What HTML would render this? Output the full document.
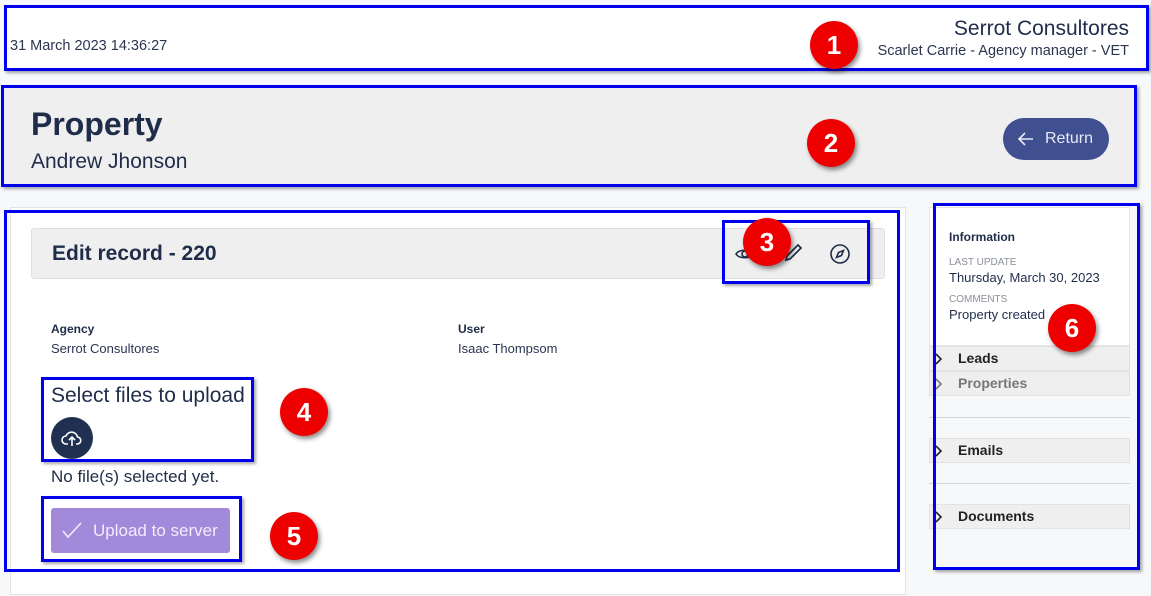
<!DOCTYPE html>
<html><head><meta charset="utf-8"><style>
*{box-sizing:border-box;margin:0;padding:0}
body{width:1151px;height:596px;overflow:hidden;background:#f7f8fa;font-family:"Liberation Sans",sans-serif;color:#1f2d4a;position:relative}
.a{position:absolute}
.bb{position:absolute;border:3px solid #0000ee;box-shadow:2px 2px 3px rgba(0,0,0,.35)}
.num{position:absolute;width:48px;height:48px;border-radius:50%;background:#ee0000;color:#fff;font:bold 26px "Liberation Sans",sans-serif;text-align:center;line-height:48px;box-shadow:2px 3px 5px rgba(0,0,0,.45);z-index:5}
.row{position:absolute;left:929px;width:201px;height:25px;background:#efefef;border:1px solid #e2e2e2;font-weight:bold;font-size:14px;color:#222;line-height:23px;padding-left:28px}
.row svg{position:absolute;left:5px;top:6px}
.hr{position:absolute;left:929px;width:201px;height:1px;background:#d0d3d8}
</style></head><body>
<div class="a" style="left:4px;top:5px;width:1145px;height:65px;background:#fff"></div>
<div class="a" style="left:10px;top:38px;font-size:14.5px;color:#2a3550">31 March 2023 14:36:27</div>
<div class="a" style="right:22px;top:17px;font-size:21px;color:#1f2d4a">Serrot Consultores</div>
<div class="a" style="right:22px;top:43px;font-size:14.5px;color:#2a3550">Scarlet Carrie - Agency manager - VET</div>
<div class="bb" style="left:4px;top:5px;width:1145px;height:66px"></div>
<div class="num" style="left:810px;top:21px">1</div>

<div class="a" style="left:1px;top:85px;width:1135px;height:101px;background:#efefef"></div>
<div class="a" style="left:31px;top:106px;font-size:32px;font-weight:bold;color:#1f2d4a">Property</div>
<div class="a" style="left:31px;top:150px;font-size:21px;color:#1f2d4a">Andrew Jhonson</div>
<div class="a" style="left:1003px;top:118px;width:106px;height:42px;border-radius:21px;background:#3f4f8f;color:#e8eaf5;font-size:16px;line-height:42px;padding-left:42px">Return
<svg class="a" style="left:14px;top:12px" width="18" height="18" viewBox="0 0 18 18" fill="none" stroke="#e8eaf5" stroke-width="1.6"><path d="M16 9H2M8 3L2 9l6 6"/></svg></div>
<div class="bb" style="left:1px;top:85px;width:1136px;height:102px"></div>
<div class="num" style="left:807px;top:119px">2</div>

<div class="a" style="left:10px;top:207px;width:896px;height:388px;background:#fff;border:1px solid #e3e3e3"></div>
<div class="a" style="left:31px;top:228px;width:854px;height:51px;background:#efefef;border:1px solid #e0e0e0;border-radius:3px"></div>
<div class="a" style="left:52px;top:242px;font-size:21px;font-weight:bold;color:#1f2d4a">Edit record - 220</div>
<svg class="a" style="left:734px;top:244px" width="22" height="20" viewBox="0 0 22 20" fill="none" stroke="#1f2d4a" stroke-width="1.6"><path d="M2 10c3-5 15-5 18 0c-3 5-15 5-18 0z"/><circle cx="11" cy="10" r="3"/></svg>
<svg class="a" style="left:782px;top:242px" width="22" height="22" viewBox="0 0 22 22" fill="none" stroke="#1f2d4a" stroke-width="1.7"><path d="M4 18l1-4L16 3l3 3L8 17z"/></svg>
<svg class="a" style="left:829px;top:243px" width="22" height="22" viewBox="0 0 22 22" fill="none" stroke="#1f2d4a" stroke-width="1.6"><circle cx="11" cy="11" r="9"/><path d="M14.5 7.5l-2 5-5 2 2-5z"/></svg>
<div class="bb" style="left:722px;top:220px;width:148px;height:64px"></div>
<div class="num" style="left:743px;top:218px">3</div>

<div class="a" style="left:51px;top:322px;font-size:12px;font-weight:bold;color:#1f2d4a">Agency</div>
<div class="a" style="left:51px;top:341px;font-size:13px;color:#2a3550">Serrot Consultores</div>
<div class="a" style="left:458px;top:322px;font-size:12px;font-weight:bold;color:#1f2d4a">User</div>
<div class="a" style="left:458px;top:341px;font-size:13px;color:#2a3550">Isaac Thompsom</div>

<div class="a" style="left:51px;top:384px;font-size:21px;color:#1f2d4a">Select files to upload</div>
<div class="a" style="left:51px;top:417px;width:42px;height:42px;border-radius:50%;background:#1f3050"></div>
<svg class="a" style="left:61px;top:428px" width="22" height="20" viewBox="0 0 22 20" fill="none" stroke="#fff" stroke-width="1.6"><path d="M7 16H5a4 4 0 010-8 6 6 0 0111.5 1A3.5 3.5 0 0116 16h-1"/><path d="M11 18V9M8 12l3-3 3 3"/></svg>
<div class="bb" style="left:41px;top:377px;width:213px;height:85px"></div>
<div class="num" style="left:280px;top:388px">4</div>
<div class="a" style="left:51px;top:467px;font-size:17px;color:#1f2d4a">No file(s) selected yet.</div>
<div class="a" style="left:51px;top:508px;width:179px;height:45px;background:#a389d9;border-radius:3px;color:#f1ecfb;font-size:17px;line-height:45px;padding-left:42px">Upload to server
<svg class="a" style="left:10px;top:13px" width="22" height="20" viewBox="0 0 22 20" fill="none" stroke="#f1ecfb" stroke-width="1.6"><path d="M2 10l5 6L20 2"/></svg></div>
<div class="bb" style="left:41px;top:496px;width:201px;height:66px"></div>
<div class="num" style="left:270px;top:512px">5</div>
<div class="bb" style="left:4px;top:210px;width:896px;height:362px;box-shadow:none"></div>

<div class="a" style="left:929px;top:207px;width:201px;height:139px;background:#fff;border:1px solid #e6e6e6"></div>
<div class="a" style="left:949px;top:230px;font-size:12px;font-weight:bold;color:#1f2d4a">Information</div>
<div class="a" style="left:949px;top:257px;font-size:10px;color:#8a8f99">LAST UPDATE</div>
<div class="a" style="left:949px;top:270px;font-size:13px;color:#1f2d4a">Thursday, March 30, 2023</div>
<div class="a" style="left:949px;top:294px;font-size:10px;color:#8a8f99">COMMENTS</div>
<div class="a" style="left:949px;top:307px;font-size:13px;color:#1f2d4a">Property created</div>
<div class="row" style="top:346px">Leads<svg width="8" height="12" viewBox="0 0 8 12" fill="none" stroke="#222" stroke-width="1.6"><path d="M1 1l5 5-5 5"/></svg></div>
<div class="row" style="top:371px;color:#777">Properties<svg width="8" height="12" viewBox="0 0 8 12" fill="none" stroke="#777" stroke-width="1.6"><path d="M1 1l5 5-5 5"/></svg></div>
<div class="hr" style="top:417px"></div>
<div class="row" style="top:438px">Emails<svg width="8" height="12" viewBox="0 0 8 12" fill="none" stroke="#222" stroke-width="1.6"><path d="M1 1l5 5-5 5"/></svg></div>
<div class="hr" style="top:483px"></div>
<div class="row" style="top:504px">Documents<svg width="8" height="12" viewBox="0 0 8 12" fill="none" stroke="#222" stroke-width="1.6"><path d="M1 1l5 5-5 5"/></svg></div>
<div class="bb" style="left:933px;top:203px;width:207px;height:367px"></div>
<div class="num" style="left:1048px;top:304px">6</div>
</body></html>
